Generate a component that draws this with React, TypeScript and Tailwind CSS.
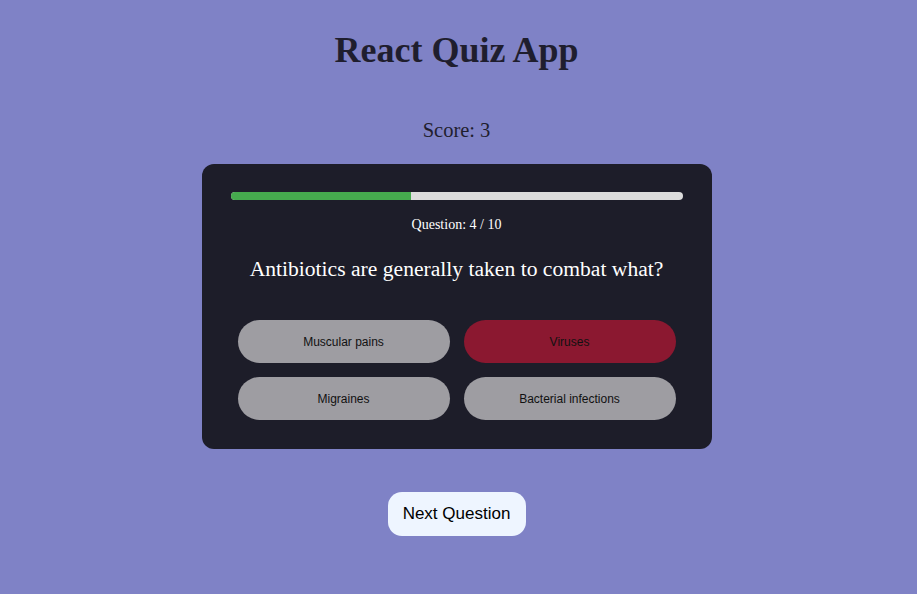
import { useState } from "react";

const options = ["Muscular pains", "Viruses", "Migraines", "Bacterial infections"];

const App = () => {
  const [picked] = useState("Viruses");
  const current = 4;
  const total = 10;

  return (
    <div className="min-h-[594px] w-full pr-[4px] bg-[#7f82c6] flex flex-col items-center font-['Liberation_Serif',serif]">
      <h1 className="mt-[28px] h-[44px] leading-[44px] text-[36px] font-bold text-[#1f1e2e]">
        React Quiz App
      </h1>
      <div className="mt-[46px] h-[24px] leading-[24px] text-[20.5px] text-[#1f1e2e]">Score: 3</div>

      {/* Quiz card */}
      <div className="mt-[22px] w-[510px] h-[285px] bg-[#1d1d29] rounded-[12px] px-[29px] pt-[28px] flex flex-col items-center">
        <div className="w-full h-[8px] rounded-full bg-[#dcdcdc] overflow-hidden">
          <div className="h-full bg-[#46aa4e]" style={{ width: `${(current / total) * 100}%` }} />
        </div>
        <div className="mt-[17px] text-[14px] leading-[16px] text-white">
          Question: {current} / {total}
        </div>
        <div className="mt-[23px] text-[21.6px] leading-[26px] text-white">
          Antibiotics are generally taken to combat what?
        </div>
        <div className="mt-[38px] grid grid-cols-2 gap-[14px] font-['Liberation_Sans',sans-serif]">
          {options.map((o) => (
            <button
              key={o}
              className={`w-[212px] h-[43px] rounded-full text-[12px] text-[#111111] ${
                o === picked ? "bg-[#8b1830]" : "bg-[#9e9da2]"
              }`}
            >
              {o}
            </button>
          ))}
        </div>
      </div>

      <button className="mt-[43px] w-[138px] h-[44px] rounded-[14px] bg-[#eef5ff] text-[17px] text-black font-['Liberation_Sans',sans-serif]">
        Next Question
      </button>
    </div>
  );
};

export default App;
